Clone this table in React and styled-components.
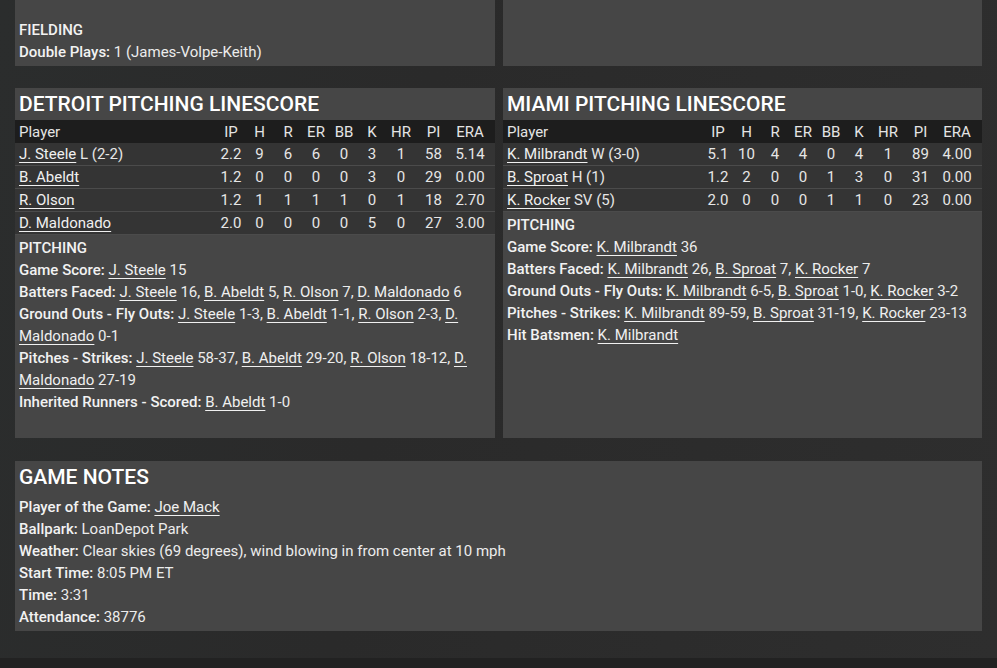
import React from "react";
import styled, { createGlobalStyle } from "styled-components";

const Global = createGlobalStyle`
  html, body { margin: 0; padding: 0; background: #2c2c2c; }
  body { font-family: Roboto, "Liberation Sans", Arial, sans-serif; color: #ececec; font-size: 15px; }
  * { box-sizing: border-box; }
`;

const Page = styled.div`
  padding: 0 15px;
  display: flex;
  flex-direction: column;
  gap: 22px;
  background: linear-gradient(100deg, #2b2d2d 0%, #2a2a2a 40%, #2e2e2e 100%);
`;

const Row2 = styled.div`
  display: grid;
  grid-template-columns: 480px 479px;
  gap: 8px;
`;

const Card = styled.section`
  background: #464646;
  margin-top: ${(p) => p.$mt || "0"};
  margin-bottom: ${(p) => p.$mb || "0"};
`;

const Title = styled.h2`
  margin: 0;
  height: 32px;
  padding: 0 4px;
  font-size: 21px;
  font-weight: 500;
  line-height: 32px;
  color: #ffffff;
`;

const Body = styled.div`
  padding: ${(p) => p.$pad || "2px 4px 25px"};
  line-height: 22px;
  font-size: 15px;
  color: #ececec;
`;

const SubHead = styled.div`
  font-weight: 500;
  color: #f2f2f2;
`;

const Line = styled.div``;

const Label = styled.b`
  font-weight: 500;
  color: #f2f2f2;
`;

const A = styled.a`
  color: #f0f0f0;
  text-decoration: underline;
  text-underline-offset: 3px;
  text-decoration-thickness: 1px;
`;

const Grid = styled.div`
  display: grid;
  grid-template-columns: 1fr 28px 29px 28px 28px 28px 28px 30px 35px 38px;
  padding-right: 6px;
  height: 23px;
  align-items: center;
  font-size: 15px;
  line-height: 22px;
  color: ${(p) => (p.$head ? "#e4e4e4" : "#e6e6e6")};
  background: ${(p) => (p.$head ? "#1d1d1d" : "#343434")};
  border-bottom: ${(p) => (p.$head ? "none" : "1px solid #4b4b4b")};
`;

const Cell = styled.span`
  text-align: center;
  white-space: nowrap;
`;

const NameCell = styled.span`
  padding-left: 4px;
  white-space: nowrap;
`;

const Footer = styled.div`
  height: 10px;
  background: #222222;
  margin: 0 -15px;
`;

const cols = ["IP", "H", "R", "ER", "BB", "K", "HR", "PI", "ERA"];

const detroit = [
  ["J. Steele", "L (2-2)", "2.2", "9", "6", "6", "0", "3", "1", "58", "5.14"],
  ["B. Abeldt", "", "1.2", "0", "0", "0", "0", "3", "0", "29", "0.00"],
  ["R. Olson", "", "1.2", "1", "1", "1", "1", "0", "1", "18", "2.70"],
  ["D. Maldonado", "", "2.0", "0", "0", "0", "0", "5", "0", "27", "3.00"],
];

const miami = [
  ["K. Milbrandt", "W (3-0)", "5.1", "10", "4", "4", "0", "4", "1", "89", "4.00"],
  ["B. Sproat", "H (1)", "1.2", "2", "0", "0", "1", "3", "0", "31", "0.00"],
  ["K. Rocker", "SV (5)", "2.0", "0", "0", "0", "1", "1", "0", "23", "0.00"],
];

function Linescore({ rows }) {
  return (
    <div>
      <Grid $head>
        <NameCell>Player</NameCell>
        {cols.map((c) => (
          <Cell key={c}>{c}</Cell>
        ))}
      </Grid>
      {rows.map((r) => (
        <Grid key={r[0]}>
          <NameCell>
            <A>{r[0]}</A>
            {r[1] ? " " + r[1] : ""}
          </NameCell>
          {r.slice(2).map((v, i) => (
            <Cell key={i}>{v}</Cell>
          ))}
        </Grid>
      ))}
    </div>
  );
}

export default function App() {
  return (
    <>
      <Global />
      <Page>
        <Row2>
          <Card>
            <Body $pad="19px 4px 3px">
              <SubHead>FIELDING</SubHead>
              <Line>
                <Label>Double Plays:</Label> 1 (James-Volpe-Keith)
              </Line>
            </Body>
          </Card>
          <Card />
        </Row2>

        <Row2>
          <Card>
            <Title>DETROIT PITCHING LINESCORE</Title>
            <Linescore rows={detroit} />
            <Body>
              <SubHead>PITCHING</SubHead>
              <Line>
                <Label>Game Score:</Label> <A>J. Steele</A> 15
              </Line>
              <Line>
                <Label>Batters Faced:</Label> <A>J. Steele</A> 16, <A>B. Abeldt</A> 5, <A>R. Olson</A> 7,{" "}
                <A>D. Maldonado</A> 6
              </Line>
              <Line>
                <Label>Ground Outs - Fly Outs:</Label> <A>J. Steele</A> 1-3, <A>B. Abeldt</A> 1-1,{" "}
                <A>R. Olson</A> 2-3, <A>D. Maldonado</A> 0-1
              </Line>
              <Line>
                <Label>Pitches - Strikes:</Label> <A>J. Steele</A> 58-37, <A>B. Abeldt</A> 29-20,{" "}
                <A>R. Olson</A> 18-12, <A>D. Maldonado</A> 27-19
              </Line>
              <Line>
                <Label>Inherited Runners - Scored:</Label> <A>B. Abeldt</A> 1-0
              </Line>
            </Body>
          </Card>
          <Card>
            <Title>MIAMI PITCHING LINESCORE</Title>
            <Linescore rows={miami} />
            <Body>
              <SubHead>PITCHING</SubHead>
              <Line>
                <Label>Game Score:</Label> <A>K. Milbrandt</A> 36
              </Line>
              <Line>
                <Label>Batters Faced:</Label> <A>K. Milbrandt</A> 26, <A>B. Sproat</A> 7, <A>K. Rocker</A> 7
              </Line>
              <Line>
                <Label>Ground Outs - Fly Outs:</Label> <A>K. Milbrandt</A> 6-5, <A>B. Sproat</A> 1-0,{" "}
                <A>K. Rocker</A> 3-2
              </Line>
              <Line>
                <Label>Pitches - Strikes:</Label> <A>K. Milbrandt</A> 89-59, <A>B. Sproat</A> 31-19,{" "}
                <A>K. Rocker</A> 23-13
              </Line>
              <Line>
                <Label>Hit Batsmen:</Label> <A>K. Milbrandt</A>
              </Line>
            </Body>
          </Card>
        </Row2>

        <Card $mt="1px" $mb="5px">
          <Title>GAME NOTES</Title>
          <Body $pad="3px 4px 3px">
            <Line>
              <Label>Player of the Game:</Label> <A>Joe Mack</A>
            </Line>
            <Line>
              <Label>Ballpark:</Label> LoanDepot Park
            </Line>
            <Line>
              <Label>Weather:</Label> Clear skies (69 degrees), wind blowing in from center at 10 mph
            </Line>
            <Line>
              <Label>Start Time:</Label> 8:05 PM ET
            </Line>
            <Line>
              <Label>Time:</Label> 3:31
            </Line>
            <Line>
              <Label>Attendance:</Label> 38776
            </Line>
          </Body>
        </Card>
        <Footer />
      </Page>
    </>
  );
}
